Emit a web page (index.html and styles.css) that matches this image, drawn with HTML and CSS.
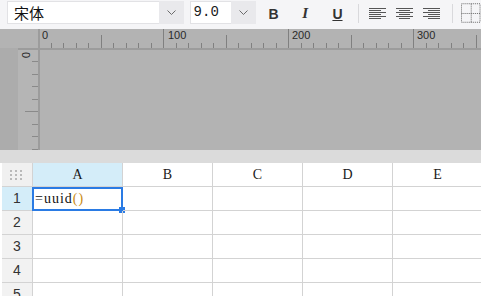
FILE: index.html
```html
<!DOCTYPE html>
<html lang="zh-CN">
<head>
    <meta charset="UTF-8">
    <meta name="viewport" content="width=device-width, initial-scale=1.0">
    <title>报表设计</title>
    <link rel="stylesheet" href="styles.css">
</head>
<body>
    <!-- 工具栏 -->
    <div class="toolbar">
        <div class="combo combo-font">
            <span class="combo-text">宋体</span>
            <span class="combo-btn"><svg width="9" height="5" viewBox="0 0 9 5"><polyline points="0.5,0.5 4.5,4.5 8.5,0.5" fill="none" stroke="#6b6b6b"/></svg></span>
        </div>
        <div class="combo combo-size">
            <span class="combo-text">9.0</span>
            <span class="combo-btn"><svg width="9" height="5" viewBox="0 0 9 5"><polyline points="0.5,0.5 4.5,4.5 8.5,0.5" fill="none" stroke="#6b6b6b"/></svg></span>
        </div>
        <span class="tool tool-b">B</span>
        <span class="tool tool-i">I</span>
        <span class="tool tool-u">U</span>
        <span class="sep"></span>
        <span class="tool tool-align">
            <svg width="17" height="12" viewBox="0 0 17 12" fill="#555"><rect y="0" width="17" height="1"/><rect y="2" width="12" height="1"/><rect y="4" width="17" height="1"/><rect y="6" width="12" height="1"/><rect y="8" width="17" height="1"/><rect y="10" width="12" height="1"/></svg>
        </span>
        <span class="tool tool-align">
            <svg width="17" height="12" viewBox="0 0 17 12" fill="#555"><rect y="0" width="17" height="1"/><rect x="3" y="2" width="11" height="1"/><rect y="4" width="17" height="1"/><rect x="3" y="6" width="11" height="1"/><rect y="8" width="17" height="1"/><rect x="3" y="10" width="11" height="1"/></svg>
        </span>
        <span class="tool tool-align">
            <svg width="17" height="12" viewBox="0 0 17 12" fill="#555"><rect y="0" width="17" height="1"/><rect x="5" y="2" width="12" height="1"/><rect y="4" width="17" height="1"/><rect x="5" y="6" width="12" height="1"/><rect y="8" width="17" height="1"/><rect x="5" y="10" width="12" height="1"/></svg>
        </span>
        <span class="sep"></span>
        <span class="tool tool-border">
            <svg width="20" height="20" viewBox="0 0 20 20" fill="none" stroke="#666" stroke-dasharray="1 1"><rect x="0.5" y="0.5" width="19" height="19"/><path d="M0.5 10.5h19M10.5 0.5v19"/></svg>
        </span>
    </div>

    <!-- 设计区 + 标尺 -->
    <div class="designer">
        <div class="corner"></div>
        <div class="vline"></div>
        <svg class="ruler-top" width="441" height="19" viewBox="0 0 441 19">
            <path fill="none" stroke="#808080" d="M11.5 14v5M23.5 14v5M36.5 14v5M48.5 14v5M73.5 14v5M86.5 14v5M98.5 14v5M111.5 14v5M136.5 14v5M148.5 14v5M161.5 14v5M173.5 14v5M198.5 14v5M211.5 14v5M223.5 14v5M236.5 14v5M261.5 14v5M273.5 14v5M286.5 14v5M298.5 14v5M323.5 14v5M336.5 14v5M348.5 14v5M361.5 14v5M386.5 14v5M398.5 14v5M411.5 14v5M423.5 14v5M61.5 6v13M186.5 6v13M311.5 6v13M436.5 6v13M123.5 0v19M248.5 0v19M373.5 0v19"/>
            <g class="ruler-num">
                <text x="2" y="10">0</text>
                <text x="128" y="10">100</text>
                <text x="252" y="10">200</text>
                <text x="377" y="10">300</text>
            </g>
        </svg>
        <div class="gutter"></div>
        <div class="hline"></div>
        <svg class="ruler-left" width="20" height="100" viewBox="0 0 20 100">
            <path fill="none" stroke="#8a8a8a" d="M14 11.5h6M14 24.5h6M14 36.5h6M14 49.5h6M7 61.5h13M14 74.5h6M14 86.5h6M14 99.5h6"/>
            <text class="ruler-num" transform="translate(4,2) rotate(90)">0</text>
        </svg>
        <div class="canvas"></div>
    </div>

    <div class="band"></div>

    <!-- 单元格 -->
    <div class="sheet">
        <div class="cell corner-cell">
            <svg width="14" height="11" viewBox="0 0 14 11" fill="#b9b9b9"><rect x="0" y="0" width="2" height="2"/><rect x="5" y="0" width="2" height="2"/><rect x="10" y="0" width="2" height="2"/><rect x="0" y="4" width="2" height="2"/><rect x="5" y="4" width="2" height="2"/><rect x="10" y="4" width="2" height="2"/><rect x="0" y="8" width="2" height="2"/><rect x="5" y="8" width="2" height="2"/><rect x="10" y="8" width="2" height="2"/></svg>
        </div>
        <div class="cell head active">A</div>
        <div class="cell head">B</div>
        <div class="cell head">C</div>
        <div class="cell head">D</div>
        <div class="cell head">E</div>

        <div class="cell rowhead active">1</div>
        <div class="cell data">=uuid<span class="paren">()</span><span class="selection"><span class="handle"></span></span></div>
        <div class="cell"></div><div class="cell"></div><div class="cell"></div><div class="cell"></div>

        <div class="cell rowhead">2</div>
        <div class="cell"></div><div class="cell"></div><div class="cell"></div><div class="cell"></div><div class="cell"></div>

        <div class="cell rowhead">3</div>
        <div class="cell"></div><div class="cell"></div><div class="cell"></div><div class="cell"></div><div class="cell"></div>

        <div class="cell rowhead">4</div>
        <div class="cell"></div><div class="cell"></div><div class="cell"></div><div class="cell"></div><div class="cell"></div>

        <div class="cell rowhead">5</div>
        <div class="cell"></div><div class="cell"></div><div class="cell"></div><div class="cell"></div><div class="cell"></div>
    </div>
</body>
</html>
```

FILE: styles.css
```css
/* 초기화 */
* {box-sizing: border-box;}
body {margin: 0; width: 481px; height: 296px; overflow: hidden;
    background: #fff; font-family: "Liberation Sans", sans-serif;}

/* toolbar */
.toolbar {display: flex; align-items: flex-start;
    height: 29px; padding-left: 7px;
    background: #f5f5f7;}
.combo {display: flex; height: 23px; margin-top: 1px;}
.combo-text {flex: 1; background: #fff;
    border: 1px solid #e2e2e5; border-right: 0;}
.combo-btn {display: flex; align-items: center; justify-content: center;
    width: 25px; background: #e9e9ec;}
.combo-font {width: 181px;}
.combo-font .combo-text {padding-left: 6px;
    font: 15px/21px "Noto Sans CJK SC", sans-serif; color: #111;}
.combo-size {width: 68px; margin-left: 6px;}
.combo-size .combo-text {padding-left: 3px;
    font: 14px/21px "Liberation Mono", monospace; color: #1a1a1a;}

.tool {display: flex; align-items: center; justify-content: center;
    height: 27px; color: #333;}
.tool-b {width: 32px; margin-left: 2px; font: bold 14px "Liberation Sans", sans-serif;}
.tool-i {width: 33px; font: italic bold 15px "Liberation Serif", serif;}
.tool-u {width: 33px; font: bold 14px "Liberation Sans", sans-serif; text-decoration: underline;}
.tool-align {width: 28px;}
.tool-border {height: 26px; overflow: hidden;}
.sep {width: 1px; height: 19px; margin: 4px 5px 0 4px; background: #d9d9dc;}
.tool-align + .sep {margin: 4px 8px 0 7px;}

/* designer + rulers */
.designer {display: grid;
    grid-template-columns: 18px 20px 2px 1fr;
    grid-template-rows: 19px 2px 100px;
    background: #b3b3b3;}
.corner {grid-row: 1; grid-column: 1 / 3;}
.vline {grid-row: 1 / 4; grid-column: 3; background: #9c9c9c;}
.ruler-top {grid-row: 1; grid-column: 4; display: block;}
.gutter {grid-row: 2 / 4; grid-column: 1; background: #acacac;}
.hline {grid-row: 2; grid-column: 2 / 5; background: #9c9c9c;}
.ruler-left {grid-row: 3; grid-column: 2; display: block; background: #b5b5b5;}
.canvas {grid-row: 3; grid-column: 4;}
.ruler-num {font: 11px "Liberation Sans", sans-serif; fill: #2a2a2a;}

.band {height: 13px; background: #dbdbdb;}

/* sheet */
.sheet {display: grid;
    grid-template-columns: 31px repeat(5, 90px);
    grid-auto-rows: 24px;
    padding-left: 2px;}
.cell {position: relative;
    border-right: 1px solid #d3d3d3; border-bottom: 1px solid #d3d3d3;}
.corner-cell {display: flex; align-items: center; justify-content: center;
    padding-top: 2px; background: #f0f0f0;}
/* 宋体 느낌을 내려고 serif 사용 */
.head {font: 14px/24px "Liberation Serif", serif; text-align: center; color: #1a1a1a;}
.rowhead {font: 14px/23px "Liberation Sans", sans-serif; text-align: center;
    color: #333; background: #f2f2f2;}
.active {background: #d4edf9;}
.data {padding-left: 2px; font: 14px/24px "Liberation Serif", serif;
    letter-spacing: 1px; color: #111;}
.paren {color: #c98a12;}

/* 선택 영역 */
.selection {position: absolute; top: 0; left: -1px;
    width: 91px; height: 24px;
    border: 2px solid #2a7be4;}
.handle {position: absolute; left: 85px; top: 18px;
    width: 6px; height: 6px; background: #2a7be4;}
```
